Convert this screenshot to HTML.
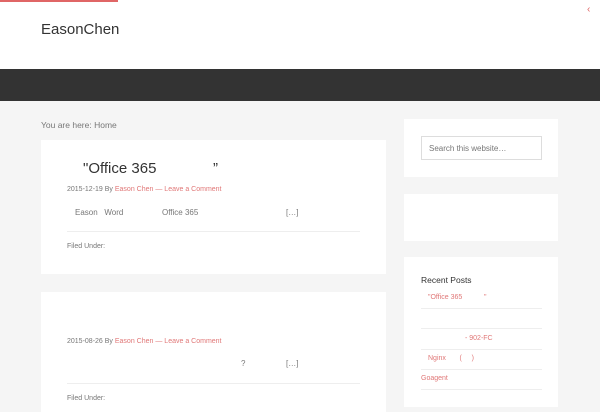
<!DOCTYPE html>
<html><head><meta charset="utf-8"><style>
*{margin:0;padding:0;box-sizing:border-box}
body{width:600px;height:400px;overflow:hidden;background:#f5f5f5;font-family:"Liberation Sans","Noto Sans CJK SC",sans-serif;position:relative;color:#333}
.a{position:absolute}
.red{color:#e07777}
.g{color:#777}
</style></head><body>
<div class="a" style="left:0;top:0;width:600px;height:69px;background:#fff"></div>
<div class="a" style="left:0;top:0;width:118px;height:2px;background:#e06666"></div>
<div class="a" style="left:587px;top:4px;font-size:10px;color:#e06666">‹</div>
<div class="a" style="left:41px;top:21px;font-size:15px;color:#333">EasonChen</div>
<div class="a" style="left:0;top:69px;width:600px;height:32px;background:#333"></div>
<div class="a g" style="left:41px;top:120px;font-size:8.5px">You are here: Home</div>

<div class="a" style="left:41px;top:140px;width:345px;height:134px;background:#fff"></div>
<div class="a" style="left:83px;top:160px;font-size:15px;color:#333">"Office 365</div>
<div class="a" style="left:213px;top:160px;font-size:15px;color:#333">”</div>
<div class="a g" style="left:67px;top:186px;font-size:7px">2015-12-19 By <span class="red">Eason Chen</span> <span class="red">— Leave a Comment</span></div>
<div class="a g" style="left:75px;top:208px;font-size:8px">Eason &nbsp; Word</div>
<div class="a g" style="left:162px;top:208px;font-size:8px">Office 365</div>
<div class="a g" style="left:286px;top:208px;font-size:8px">[…]</div>
<div class="a" style="left:67px;top:231px;width:293px;height:1px;background:#eee"></div>
<div class="a g" style="left:67px;top:243px;font-size:7px">Filed Under:</div>

<div class="a" style="left:41px;top:292px;width:345px;height:120px;background:#fff"></div>
<div class="a g" style="left:67px;top:338px;font-size:7px">2015-08-26 By <span class="red">Eason Chen</span> <span class="red">— Leave a Comment</span></div>
<div class="a g" style="left:241px;top:359px;font-size:8px">?</div>
<div class="a g" style="left:286px;top:359px;font-size:8px">[…]</div>
<div class="a" style="left:67px;top:383px;width:293px;height:1px;background:#eee"></div>
<div class="a g" style="left:67px;top:395px;font-size:7px">Filed Under:</div>

<div class="a" style="left:404px;top:119px;width:154px;height:58px;background:#fff"></div>
<div class="a" style="left:421px;top:136px;width:121px;height:24px;border:1px solid #ddd;font-size:8px;color:#777;padding:7px 0 0 7px">Search this website…</div>
<div class="a" style="left:404px;top:194px;width:154px;height:47px;background:#fff"></div>
<div class="a" style="left:404px;top:257px;width:154px;height:150px;background:#fff"></div>
<div class="a" style="left:421px;top:275px;font-size:8.5px;color:#333">Recent Posts</div>
<div class="a red" style="left:428px;top:294px;font-size:7px">"Office 365</div>
<div class="a red" style="left:484px;top:294px;font-size:7px">"</div>
<div class="a red" style="left:465px;top:335px;font-size:7px">- 902-FC</div>
<div class="a red" style="left:428px;top:355px;font-size:7px">Nginx &nbsp; &nbsp; &nbsp; ( &nbsp; &nbsp; )</div>
<div class="a red" style="left:421px;top:375px;font-size:7px">Goagent</div>
<div class="a" style="left:421px;top:308px;width:121px;height:1px;background:#eee"></div>
<div class="a" style="left:421px;top:328px;width:121px;height:1px;background:#eee"></div>
<div class="a" style="left:421px;top:349px;width:121px;height:1px;background:#eee"></div>
<div class="a" style="left:421px;top:369px;width:121px;height:1px;background:#eee"></div>
<div class="a" style="left:421px;top:389px;width:121px;height:1px;background:#eee"></div>
</body></html>
